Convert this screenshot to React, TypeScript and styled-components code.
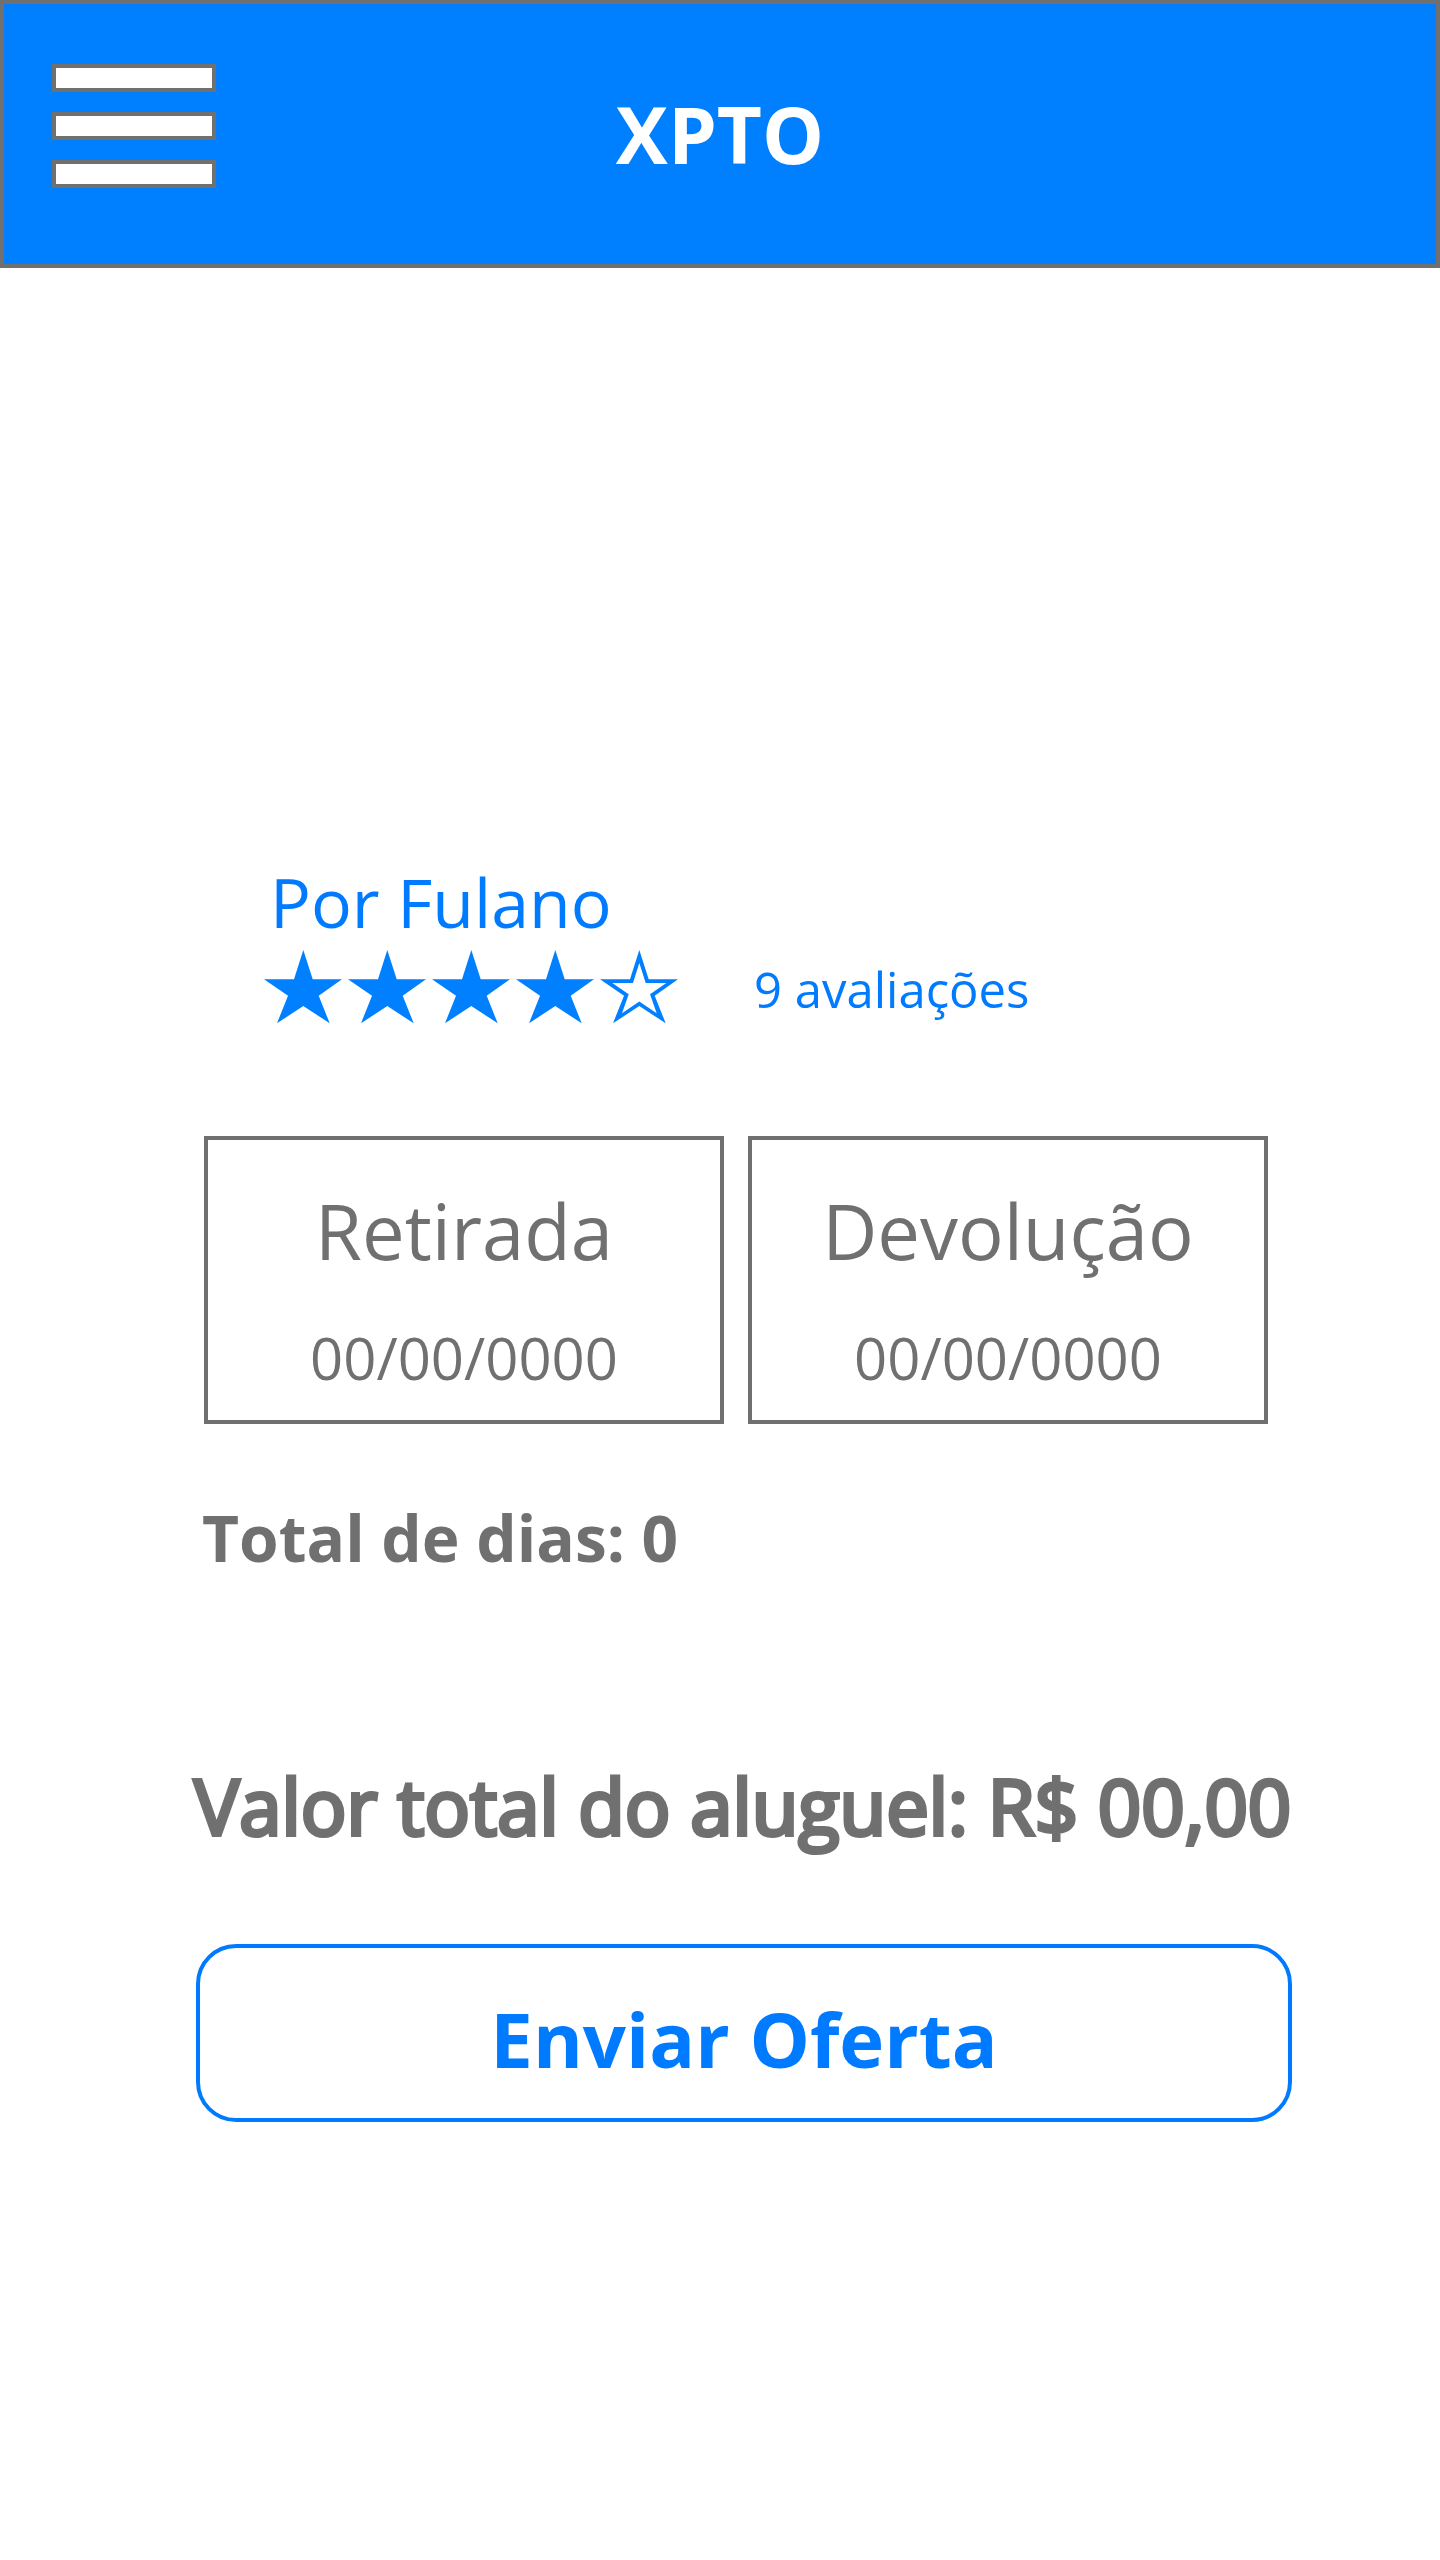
import React from "react";
import styled, { createGlobalStyle } from "styled-components";

const colors = {
  header: "#0080ff",
  accent: "#007bff",
  gray: "#707070",
};

const GlobalStyle = createGlobalStyle`
  *, *::before, *::after { box-sizing: border-box; }
  body {
    margin: 0;
    background: #fff;
    color: ${colors.gray};
    font-family: "Open Sans", "Noto Sans", sans-serif;
  }
  h1, h2, p { margin: 0; }
  button, input { font: inherit; color: inherit; }
`;

const Header = styled.header`
  display: grid;
  grid-template-columns: 1fr auto 1fr;
  align-items: center;
  height: 268px;
  padding: 0 48px;
  border: 4px solid ${colors.gray};
  background: ${colors.header};
`;

const MenuButton = styled.button`
  display: flex;
  flex-direction: column;
  align-self: start;
  gap: 20px;
  width: 164px;
  margin-top: 60px;
  padding: 0;
  border: 0;
  background: none;
  cursor: pointer;
`;

const MenuBar = styled.span`
  height: 28px;
  border: 4px solid ${colors.gray};
  background: #fff;
`;

const Brand = styled.h1`
  color: #fff;
  font-size: 78px;
  line-height: 104px;
  font-weight: 700;
`;

const Main = styled.main`
  padding: 586px 148px 96px 196px;
`;

const Owner = styled.section`
  padding-left: 68px;
  color: ${colors.accent};
`;

const OwnerName = styled.h2`
  padding-left: 6px;
  font-size: 68px;
  line-height: 96px;
  font-weight: 400;
`;

const Rating = styled.div`
  display: flex;
  align-items: center;
  gap: 76px;
`;

const Stars = styled.div`
  display: flex;
  gap: 6px;
  color: ${colors.header};

  svg { display: block; width: 78px; height: 78px; }
`;

const ReviewLink = styled.a`
  color: inherit;
  font-size: 49px;
  line-height: 64px;
  text-decoration: none;
`;

const Dates = styled.div`
  display: grid;
  grid-template-columns: 1fr 1fr;
  gap: 24px;
  margin: 108px 24px 0 8px;
`;

const DateCard = styled.div`
  display: flex;
  flex-direction: column;
  gap: 35px;
  padding: 39px 20px 22px;
  border: 4px solid ${colors.gray};
  text-align: center;
`;

const DateLabel = styled.label`
  font-size: 76px;
  line-height: 104px;
`;

const DateInput = styled.input`
  width: 100%;
  height: 80px;
  padding: 0;
  border: 0;
  background: none;
  font-size: 58px;
  line-height: 80px;
  text-align: center;
`;

const Days = styled.p`
  margin-top: 66px;
  padding-left: 6px;
  font-size: 64px;
  line-height: 96px;
  font-weight: 700;
`;

const Total = styled.p`
  margin: 168px -24px 0 -2px;
  font-size: 76px;
  line-height: 104px;
  -webkit-text-stroke: 4px ${colors.gray};
`;

const SubmitButton = styled.button`
  display: block;
  width: 100%;
  height: 178px;
  margin-top: 86px;
  padding: 12px 0 0;
  border: 4px solid ${colors.accent};
  border-radius: 40px;
  background: #fff;
  color: ${colors.accent};
  font-size: 76px;
  line-height: 104px;
  font-weight: 700;
  cursor: pointer;
`;

const OUTLINE =
  "M39.3 0L48.7 29.3H78L54.7 45.7L65.7 73.3L39.3 56L13 73.3L24 45.7L0 29.3H30Z";
const HOLE =
  "M39.3 13L33 33H12.3L28.7 44.3L22 63.3L39.3 51.5L56.7 63.3L50 44.3L66.3 33H45.7Z";

function Star({ filled }: { filled: boolean }) {
  return (
    <svg viewBox="0 0 78 78" aria-hidden="true">
      <path
        d={filled ? OUTLINE : OUTLINE + HOLE}
        fill="currentColor"
        fillRule="evenodd"
      />
    </svg>
  );
}

function DateField({ id, label }: { id: string; label: string }) {
  return (
    <DateCard>
      <DateLabel htmlFor={id}>{label}</DateLabel>
      <DateInput id={id} type="text" inputMode="numeric" defaultValue="00/00/0000" />
    </DateCard>
  );
}

export default function App() {
  return (
    <>
      <GlobalStyle />
      <Header>
        <MenuButton type="button" aria-label="Menu">
          <MenuBar />
          <MenuBar />
          <MenuBar />
        </MenuButton>
        <Brand>XPTO</Brand>
      </Header>
      <Main>
        <Owner>
          <OwnerName>Por Fulano</OwnerName>
          <Rating>
            <Stars>
              {[1, 2, 3, 4, 5].map((n) => (
                <Star key={n} filled={n <= 4} />
              ))}
            </Stars>
            <ReviewLink href="#avaliacoes">9 avaliações</ReviewLink>
          </Rating>
        </Owner>
        <Dates>
          <DateField id="retirada" label="Retirada" />
          <DateField id="devolucao" label="Devolução" />
        </Dates>
        <Days>Total de dias: 0</Days>
        <Total>Valor total do aluguel: R$ 00,00</Total>
        <SubmitButton type="button">Enviar Oferta</SubmitButton>
      </Main>
    </>
  );
}
